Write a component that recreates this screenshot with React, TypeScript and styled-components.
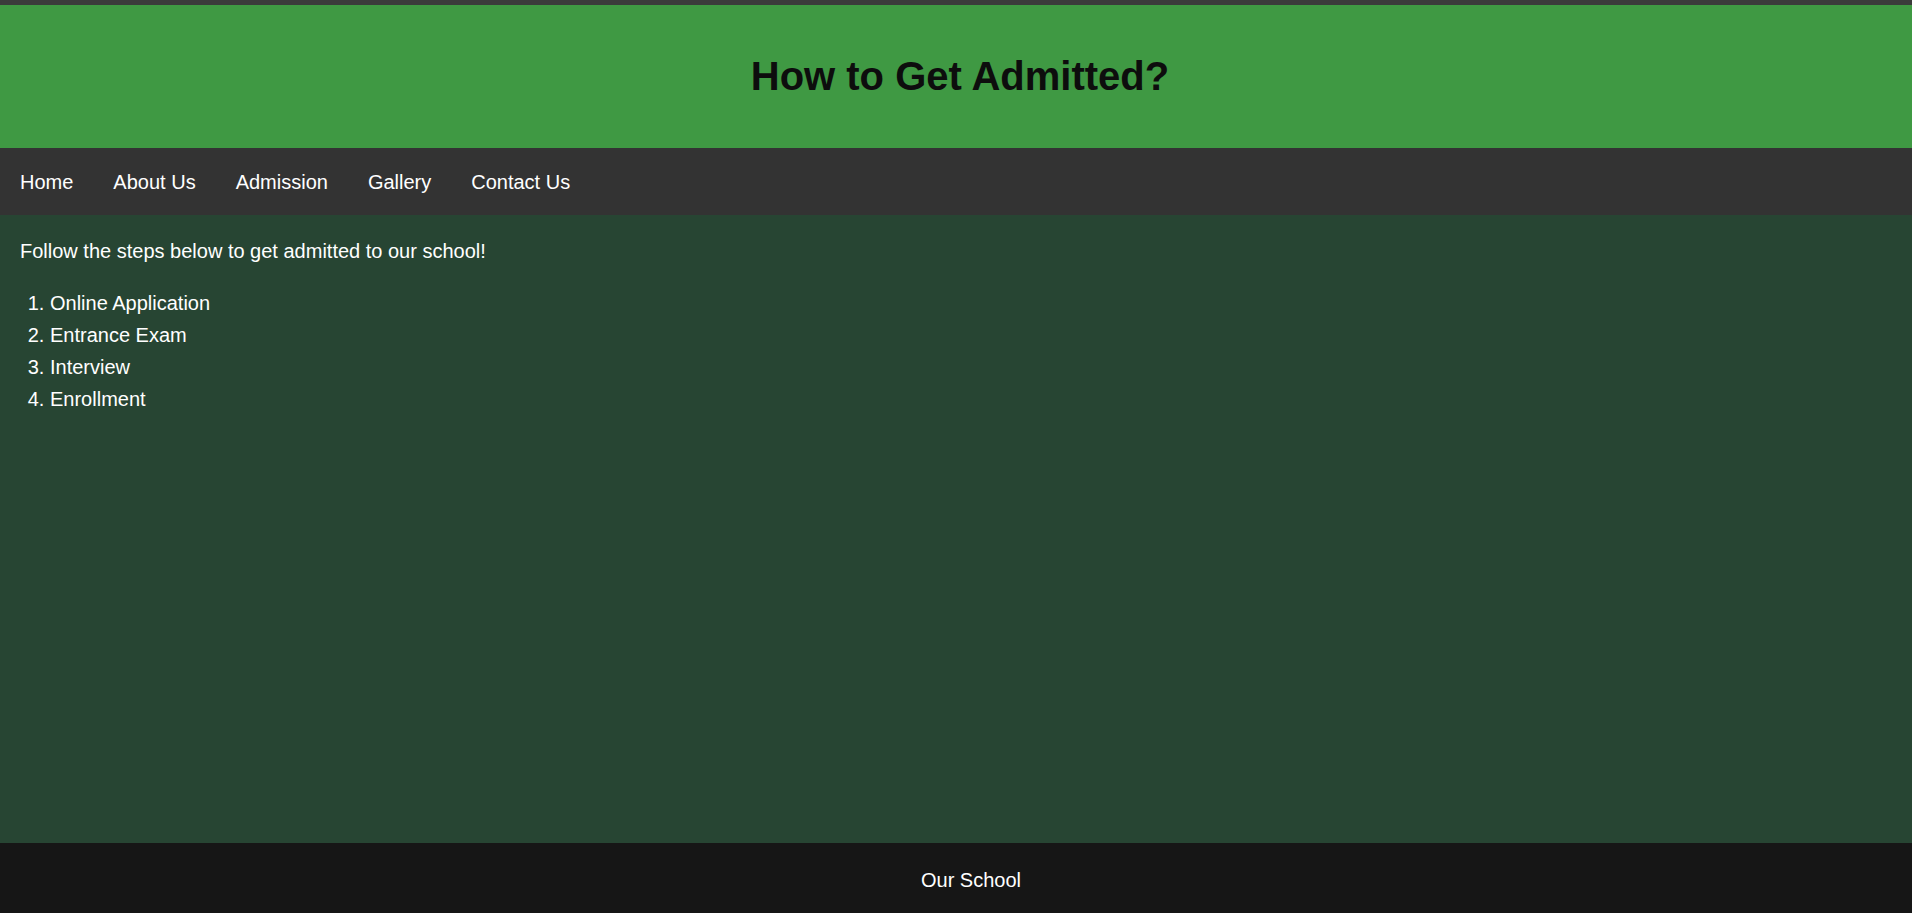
import React, { FC } from 'react';
import styled, { createGlobalStyle } from 'styled-components';

const GlobalStyle = createGlobalStyle`
  html, body {
    margin: 0;
    padding: 0;
  }

  body {
    font-family: 'Liberation Sans', Arial, sans-serif;
    font-size: 20px;
    line-height: 32px;
    color: #ffffff;
    background-color: #274533;
  }

  * {
    box-sizing: border-box;
  }
`;

const Page = styled.div`
  display: flex;
  flex-direction: column;
  min-height: 100vh;
  border-top: 5px solid #3b3b3b;
`;

const Header = styled.header`
  background-color: #3f9943;
  padding: 39px 0 40px 8px;
  text-align: center;
`;

const Title = styled.h1`
  margin: 0;
  font-size: 40px;
  line-height: 64px;
  font-weight: bold;
  color: #0d0d0d;
`;

const Nav = styled.nav`
  display: flex;
  background-color: #333333;
  padding: 18px 0 17px;
`;

const NavLink = styled.a`
  padding: 0 20px;
  color: #ffffff;
  text-decoration: none;
  cursor: pointer;
`;

const Main = styled.main`
  flex: 1;
  padding: 20px;
  background-color: #274533;
`;

const Intro = styled.p`
  margin: 0 0 20px;
`;

const Steps = styled.ol`
  margin: 0;
  padding-left: 30px;
`;

const Step = styled.li``;

const Footer = styled.footer`
  height: 70px;
  padding: 21px 0 17px 30px;
  background-color: #161616;
  text-align: center;
`;

const links = ['Home', 'About Us', 'Admission', 'Gallery', 'Contact Us'];
const steps = ['Online Application', 'Entrance Exam', 'Interview', 'Enrollment'];

const App: FC = () => {
  return (
    <>
      <GlobalStyle />
      <Page>
        <Header>
          <Title>How to Get Admitted?</Title>
        </Header>
        <Nav>
          {links.map((link) => (
            <NavLink key={link}>{link}</NavLink>
          ))}
        </Nav>
        <Main>
          <Intro>Follow the steps below to get admitted to our school!</Intro>
          <Steps>
            {steps.map((step) => (
              <Step key={step}>{step}</Step>
            ))}
          </Steps>
        </Main>
        <Footer>Our School</Footer>
      </Page>
    </>
  );
};

export default App;
